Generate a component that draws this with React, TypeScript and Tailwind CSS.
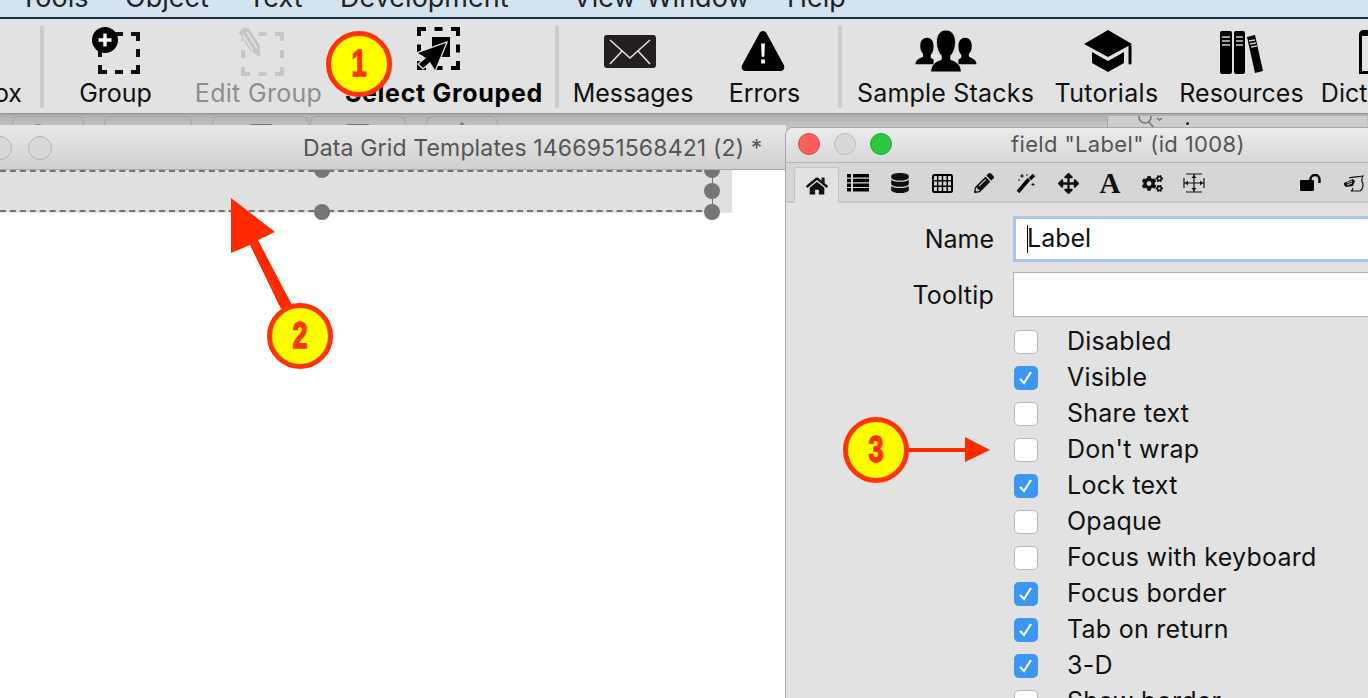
import type { ReactNode } from "react"
import { FaHome, FaDatabase, FaPencilAlt, FaArrowsAlt, FaCogs } from "react-icons/fa"

const ui = { fontFamily: "Inter, Roboto, sans-serif" }

const menus = [
  { label: "Tools", w: "w-[125px] pl-[20px]" },
  { label: "Object", w: "w-[123px]" },
  { label: "Text", w: "w-[92px]" },
  { label: "Development", w: "w-[233px]" },
  { label: "View", w: "w-[73px]" },
  { label: "Window", w: "w-[141px]" },
  { label: "Help", w: "w-[60px]" },
]

// dashed square used by the group icons, corners are little L shapes
const DashBox = ({ x, y, s, h, color }: { x: number; y: number; s: number; h: number; color: string }) => {
  const r = x + s
  const b = y + h
  const m = x + s / 2
  const n = y + h / 2
  return (
    <path
      d={`M${x} ${y + 7}V${y}h7M${r - 7} ${y}h7v7M${x} ${b - 7}v7h7M${r - 7} ${b}h7v-7M${m - 4} ${y}h8M${m - 4} ${b}h8M${x} ${n - 4}v8M${r} ${n - 4}v8`}
      fill="none"
      stroke={color}
      strokeWidth="4"
    />
  )
}

const GroupIcon = () => (
  <svg width="48" height="48" viewBox="0 0 48 48" className="mb-[1px]">
    <DashBox x={8} y={7} s={38} h={38} color="#111" />
    <circle cx="13" cy="13" r="13" fill="#000" />
    <path d="M13 6.5v13M6.5 13h13" stroke="#fff" strokeWidth="3.4" />
  </svg>
)

const EditGroupIcon = () => (
  <svg width="50" height="50" viewBox="0 0 50 50">
    <DashBox x={9} y={8} s={39} h={40} color="#c6c6c6" />
    <path d="M4 6 10 1l5 1 11 17 1 13-11-7Z" fill="#c4c4c4" stroke="#e2e2e2" strokeWidth="1" />
    <path d="M9 9l10 16M13 6l10 16" stroke="#e2e2e2" strokeWidth="1.5" />
  </svg>
)

const SelectIcon = () => (
  <svg width="54" height="50" viewBox="0 0 54 50">
    <g transform="translate(0 1)">
      <DashBox x={2} y={2} s={39} h={39} color="#000" />
      <rect x="15" y="10" width="18" height="20" fill="#000" />
      <path d="M29 16 1 26l8 5-7 6 4 4 7-6 5 8Z" fill="#000" stroke="#e2e2e2" strokeWidth="2.5" paintOrder="stroke" />
    </g>
  </svg>
)

const MailIcon = () => (
  <svg width="52" height="33" viewBox="0 0 52 33" className="mb-[8px] mr-[6px]">
    <rect width="52" height="33" rx="3" fill="#231f20" />
    <path d="M6 5 26 23 46 5M6 29l12-13M46 29 34 16" stroke="#e2e2e2" strokeWidth="1.6" fill="none" />
  </svg>
)

const WarnIcon = () => (
  <svg width="44" height="41" viewBox="0 0 46 43" className="mb-[4px] mr-[4px]">
    <path d="M23 0c2 0 3 1 4 3l18 33c1 3 0 6-4 6H5c-4 0-5-3-4-6L19 3c1-2 2-3 4-3Z" fill="#000" />
    <path d="M21 13h4l-.6 14h-2.8ZM21 30h4v4h-4Z" fill="#fff" />
  </svg>
)

const PeopleIcon = () => (
  <svg width="64" height="42" viewBox="0 0 64 44" className="mb-[4px]">
    <path d="M12 8c5 0 7 4 7 9 0 4-1 7-3 9v3l3 2v5H0c0-4 3-6 8-8v-3c-2-2-3-5-3-8 0-5 2-9 7-9Z" fill="#000" />
    <path d="M52 8c-5 0-7 4-7 9 0 4 1 7 3 9v3l-3 2v5h19c0-4-3-6-8-8v-3c2-2 3-5 3-8 0-5-2-9-7-9Z" fill="#000" />
    <path d="M32 0c7 0 10 6 10 13 0 6-2 11-5 14v4c6 2 11 5 11 13H16c0-8 5-11 11-13v-4c-3-3-5-8-5-14 0-7 3-13 10-13Z" fill="#000" stroke="#e2e2e2" strokeWidth="1" />
  </svg>
)

const CapIcon = () => (
  <svg width="52" height="43" viewBox="0 0 50 43" className="mb-[3px] ml-[4px]">
    <path d="M24 0 48 14 24 27 0 14Z" fill="#000" />
    <path d="M8 22 24 31 40 22V33L24 42 8 33Z" fill="#000" />
    <path d="M46 16v17" stroke="#000" strokeWidth="3" strokeLinecap="round" />
  </svg>
)

const BooksIcon = () => (
  <svg width="44" height="43" viewBox="0 0 44 43" className="mb-[2px]">
    <rect width="12" height="43" rx="2" fill="#000" />
    <rect x="14" width="11" height="43" rx="2" fill="#000" />
    <path d="M27 6l8-2 8 36-8 2Z" fill="#000" />
    <path d="M2 6h8M2 10h8M2 14h8M16 6h7M16 10h7M16 14h7M29 10l6-1M30 13l6-1M31 16l6-1" stroke="#ccc" strokeWidth="1.3" />
  </svg>
)

const DictIcon = () => (
  <svg width="48" height="44" viewBox="0 0 48 44" className="mb-[2px]">
    <path d="M2 44V4c0-2 2-4 4-4h42v6H5v35h43v3Z" fill="#000" />
  </svg>
)

const ListIcon = () => (
  <svg width="22" height="18" viewBox="0 0 22 18" fill="#000">
    <path d="M0 0h4v3.5H0ZM6 0h16v3.5H6ZM0 4.7h4v3.5H0ZM6 4.7h16v3.5H6ZM0 9.4h4v3.5H0ZM6 9.4h16v3.5H6ZM0 14.1h4v3.5H0ZM6 14.1h16v3.5H6Z" />
  </svg>
)

const TableIcon = () => (
  <svg width="21" height="19" viewBox="0 0 21 19" fill="none" stroke="#000">
    <rect x="1" y="1" width="19" height="17" rx="1.5" strokeWidth="2" />
    <path d="M5.7 1v17M10.5 1v17M15.2 1v17M1 6.7h19M1 12.3h19" strokeWidth="1.5" />
  </svg>
)

const WandIcon = () => (
  <svg width="20" height="20" viewBox="0 0 20 20">
    <path d="M2 19 13 6" stroke="#000" strokeWidth="3.6" />
    <path d="M14 6l4-4" stroke="#000" strokeWidth="3.6" />
    <path d="M6 1v4M4 3h4M2 7h2M17 10v3M15.500 11.500h3M11 1v2" stroke="#000" strokeWidth="0.9" />
  </svg>
)

const SizeIcon = () => (
  <svg width="22" height="20" viewBox="0 0 22 20" fill="none" stroke="#111" strokeWidth="1.2">
    <path d="M3 1h16M3 19h16M1 5v10M21 5v10M11 1v18M1 10h20" />
    <path d="M11 2 8.500 5h5ZM11 18l-2.500-3h5ZM2 10l3-2.500v5ZM20 10l-3-2.500v5Z" fill="#111" stroke="none" />
  </svg>
)

const LockIcon = () => (
  <svg width="22" height="18" viewBox="0 0 22 18">
    <rect y="6" width="14" height="11" rx="1" fill="#000" />
    <path d="M10.500 7V5.500a4.500 4.500 0 0 1 9 0V9" fill="none" stroke="#000" strokeWidth="2.400" />
  </svg>
)

const ScriptIcon = () => (
  <svg width="21" height="17" viewBox="0 0 21 17" fill="none" stroke="#111" strokeWidth="1.200">
    <path d="M6 3c4-1 9-1 14-2-2 3-1 6 0 8 0 3-1 6-3 7H8c2-1 2-2 2-3" />
    <path d="M1 8l9-4 2 2-2 5-7 1-2-2Z" fill="#111" stroke="none" />
    <path d="M4 8l5-2M4 10l5-2" stroke="#ddd" strokeWidth="0.900" />
  </svg>
)

const SearchIcon = () => (
  <svg width="26" height="14" viewBox="0 0 26 14" fill="none" stroke="#777" strokeWidth="1.600">
    <circle cx="7" cy="1" r="6" />
    <path d="M11 6l6 7M19 2l2.500 2L24 2" />
  </svg>
)

type Tool = { label: string; w: string; icon: ReactNode; color?: string; bold?: boolean; pad?: string }

const tools: Tool[] = [
  { label: "Group", w: "w-[143px]", icon: <GroupIcon /> },
  { label: "Edit Group", w: "w-[143px]", icon: <EditGroupIcon />, color: "text-[#8e8e8e] tracking-[0.3px]" },
  { label: "Select Grouped", w: "w-[225px]", icon: <SelectIcon />, bold: true, pad: "pl-[3px]" },
]

const tools2: Tool[] = [
  { label: "Messages", w: "w-[148px]", icon: <MailIcon /> },
  { label: "Errors", w: "w-[131px]", icon: <WarnIcon />, pad: "pr-[16px]" },
]

const tools3: Tool[] = [
  { label: "Sample Stacks", w: "w-[207px]", icon: <PeopleIcon />, color: "text-[#111] tracking-[0.2px]" },
  { label: "Tutorials", w: "w-[115px]", icon: <CapIcon />, color: "text-[#111] tracking-[0.3px]" },
  { label: "Resources", w: "w-[155px]", icon: <BooksIcon /> },
  { label: "Dictionary", w: "w-[124px]", icon: <DictIcon /> },
]

const ToolItem = ({ t }: { t: Tool }) => (
  <div className={`${t.w} ${t.pad ?? ""} shrink-0 flex flex-col items-center`}>
    <div className="h-[50px] flex items-end justify-center">{t.icon}</div>
    <div className={`mt-[2px] whitespace-nowrap text-[25px] leading-[30px] ${t.bold ? "font-bold text-black tracking-[0.7px]" : t.color ?? "text-[#111]"}`}>{t.label}</div>
  </div>
)

const Sep = () => <div className="w-[4px] h-[82px] shrink-0 bg-[#cccccc]" />

const inspectorIcons = [
  <ListIcon />,
  <FaDatabase size={20} />,
  <TableIcon />,
  <FaPencilAlt size={20} />,
  <WandIcon />,
  <FaArrowsAlt size={21} />,
  <span className="text-[29px] leading-[30px] font-bold" style={{ fontFamily: "'Liberation Serif', serif" }}>A</span>,
  <FaCogs size={21} />,
  <SizeIcon />,
]

const checks = [
  { label: "Disabled", on: false },
  { label: "Visible", on: true },
  { label: "Share text", on: false },
  { label: "Don't wrap", on: false },
  { label: "Lock text", on: true },
  { label: "Opaque", on: false },
  { label: "Focus with keyboard", on: false },
  { label: "Focus border", on: true },
  { label: "Tab on return", on: true },
  { label: "3-D", on: true },
  { label: "Show border", on: false },
]

const Badge = ({ n, cls }: { n: string; cls: string }) => (
  <div className={`absolute w-[66px] h-[66px] rounded-full bg-[#ffff00] border-[5px] border-[#ff3300] flex items-center justify-center ${cls}`}>
    <span className="text-[#ff3300] text-[36px] font-bold scale-x-75 [-webkit-text-stroke:1.5px_#ff3300]" style={{ fontFamily: "'Liberation Sans', sans-serif" }}>{n}</span>
  </div>
)

const Handle = ({ cls }: { cls: string }) => <div className={`absolute w-[16px] h-[16px] rounded-full bg-[#767474] ${cls}`} />

const BackTab = ({ w, children }: { w: string; children?: ReactNode }) => (
  <div className={`${w} h-[14px] shrink-0 border border-b-0 border-[#a4a4a4] rounded-t-[7px] flex justify-center pt-[7px]`}>{children}</div>
)

export default function App() {
  return (
    <div className="relative w-[1368px] h-[698px] overflow-hidden bg-[#cacaca]" style={ui}>
      {/* menu bar, cut at the top */}
      <div className="h-[19px] bg-[#d3e3f0] border-b-[2px] border-[#23303a] flex items-start overflow-hidden">
        {menus.map((m) => (
          <div key={m.label} className={`${m.w} shrink-0 text-[27px] leading-[30px] text-[#222] mt-[-17px]`}>{m.label}</div>
        ))}
      </div>

      {/* toolbar */}
      <div className="h-[95px] bg-[#e2e2e2] flex items-start pt-[7px] border-b border-[#8f8f8f]">
        <div className="w-[40px] shrink-0 h-full flex items-end justify-end pr-[18px] pb-[5px] text-[25px] leading-[30px] text-[#111]">ox</div>
        <Sep />
        {tools.map((t) => <ToolItem key={t.label} t={t} />)}
        <Sep />
        {tools2.map((t) => <ToolItem key={t.label} t={t} />)}
        <Sep />
        {tools3.map((t) => <ToolItem key={t.label} t={t} />)}
      </div>

      {/* tabs of the window behind */}
      <div className="h-[13px] bg-gradient-to-b from-[#adadad] to-[#c6c6c6] flex items-start pt-[2px] pl-[12px] overflow-hidden">
        <BackTab w="w-[72px]"><div className="w-[18px] h-[18px] rounded-full border-[2px] border-[#808080] mr-[20px]" /></BackTab>
        <div className="w-[20px] shrink-0" />
        <BackTab w="w-[88px]" />
        <div className="w-[20px] shrink-0" />
        <BackTab w="w-[97px]"><div className="w-[24px] h-[10px] border-[2px] border-[#707070] rounded-t-[2px]" /></BackTab>
        <div className="w-[1px] shrink-0" />
        <BackTab w="w-[96px]"><div className="w-[24px] h-[10px] border-[2px] border-[#707070] rounded-t-[2px]" /></BackTab>
        <div className="w-[20px] shrink-0" />
        <BackTab w="w-[72px]"><div className="w-[10px] h-[10px] rotate-45 border-l-[2px] border-t-[2px] border-[#808080]" /></BackTab>
        <div className="w-[609px] shrink-0" />
        <div className="w-[260px] h-[14px] shrink-0 border-l border-[#a4a4a4] bg-[#cdcdcd] flex items-start pl-[30px] gap-[22px]">
          <SearchIcon />
          <div className="w-[3px] h-[3px] mt-[6px] bg-[#222] rounded-full" />
        </div>
      </div>

      <div className="flex h-[571px]">
        {/* document window, its title bar sits a little over the tab strip */}
        <div className="relative w-[786px] shrink-0 mt-[-2px] h-[573px] flex flex-col bg-white">
          <div className="relative z-10 h-[45px] shrink-0 bg-gradient-to-b from-[#e8e8e8] to-[#d0d0d0] border-b border-[#a8a8a8] flex items-center pt-[1px]">
            <div className="w-[24px] h-[24px] shrink-0 ml-[-12px] rounded-full bg-[#d8d8d8] border border-[#b4b4b4]" />
            <div className="w-[24px] h-[24px] shrink-0 ml-[16px] rounded-full bg-[#d8d8d8] border border-[#b4b4b4]" />
            <div className="ml-[251px] pt-[2px] whitespace-nowrap text-[23px] tracking-[0.15px] text-[#555]">Data Grid Templates 1466951568421 (2) *</div>
          </div>
          <div className="relative h-[43px] w-[732px] shrink-0 bg-[#e0e0e0] border-b border-[#e8e8e8]">
            <div className="absolute left-0 top-0 w-[712px] h-[42px] border-y-2 border-x-0 border-dashed border-[#757575]" />
            <div className="absolute left-[712px] top-0 h-[42px] w-0 border-l border-[#757575]" />
            <Handle cls="left-[314px] top-[-8px]" />
            <Handle cls="left-[704px] top-[-8px]" />
            <Handle cls="left-[704px] top-[13px]" />
            <Handle cls="left-[314px] top-[34px]" />
            <Handle cls="left-[704px] top-[34px]" />
          </div>
        </div>

        {/* property inspector */}
        <div className="relative z-10 flex-1 ml-[-1px] bg-[#e2e2e2] border-l border-t border-[#a8a8a8] rounded-tl-[8px] overflow-hidden">
          <div className="h-[35px] bg-gradient-to-b from-[#ececec] to-[#d8d8d8] border-b border-[#b4b4b4] flex items-center pl-[12px] pb-[2px]">
            <div className="w-[22px] h-[22px] shrink-0 rounded-full bg-[#fc5f57] border border-[#e0443e]" />
            <div className="w-[22px] h-[22px] shrink-0 ml-[14px] rounded-full bg-[#d8d8d8] border border-[#bcbcbc]" />
            <div className="w-[22px] h-[22px] shrink-0 ml-[14px] rounded-full bg-[#28c940] border border-[#1aab29]" />
            <div className="ml-[119px] whitespace-nowrap text-[22px] tracking-[0.35px] text-[#555]">field "Label" (id 1008)</div>
          </div>
          <div className="h-[40px] bg-[#d6d6d6] border-b-[2px] border-[#c8c8c8] flex items-end pl-[8px] text-[#111]">
            <div className="w-[45px] h-[36px] mb-[-2px] shrink-0 bg-[#e2e2e2] border border-b-0 border-[#c4c4c4] rounded-t-[3px] flex items-center justify-center">
              <FaHome size={22} />
            </div>
            <div className="flex items-center h-[36px] ml-[-2px]">
              {inspectorIcons.map((ic, i) => (
                <div key={i} className="w-[42px] flex justify-center">{ic}</div>
              ))}
            </div>
            <div className="ml-[85px] h-[36px] flex items-center gap-[21px]">
              <LockIcon />
              <ScriptIcon />
            </div>
          </div>

          <div className="pt-[13px] pl-[227px]">
            <div className="flex items-center h-[46px]">
              <div className="w-[208px] ml-[-227px] pt-[1px] shrink-0 text-right text-[25px] text-[#111]">Name</div>
              <div className="ml-[19px] mr-[-10px] flex-1 h-[46px] bg-white border-[3px] border-[#a9c6e8] flex items-center pl-[11px] text-[25px] text-[#111]">
                <span className="w-[1px] h-[28px] bg-black mr-[-1px]" />Label
              </div>
            </div>
            <div className="flex items-center h-[45px] mt-[10px]">
              <div className="w-[208px] ml-[-227px] pt-[2px] shrink-0 text-right text-[25px] tracking-[0.2px] text-[#111]">Tooltip</div>
              <div className="ml-[19px] mr-[-10px] flex-1 h-[45px] bg-white border border-[#b4b4b4]" />
            </div>
            <div className="mt-[7px] flex flex-col">
              {checks.map((c) => (
                <div key={c.label} className="flex items-center h-[36px] pl-[1px]">
                  {c.on ? (
                    <div className="w-[24px] h-[24px] shrink-0 rounded-[5px] bg-[#3b96f5] flex items-center justify-center">
                      <svg width="16" height="14" viewBox="0 0 16 14" fill="none" stroke="#fff" strokeWidth="2.2"><path d="M2 8l4 4 7-11" /></svg>
                    </div>
                  ) : (
                    <div className="w-[24px] h-[24px] shrink-0 rounded-[5px] bg-white border border-[#b8b8b8]" />
                  )}
                  <div className="ml-[29px] whitespace-nowrap text-[25px] tracking-[0.25px] text-[#111]">{c.label}</div>
                </div>
              ))}
            </div>
          </div>
        </div>
      </div>

      {/* annotations */}
      <svg className="absolute left-0 top-0 z-20 pointer-events-none" width="1368" height="698">
        <path d="M231 198 275 232 258 240 292 305 281 309 250 245 231 253Z" fill="#ff2a00" />
        <path d="M905 448h60v-11l25 13-25 12v-10h-60Z" fill="#ff2a00" />
      </svg>
      <Badge n="1" cls="left-[326px] top-[31px] z-20" />
      <Badge n="2" cls="left-[267px] top-[303px] z-20" />
      <Badge n="3" cls="left-[843px] top-[417px] z-20" />
    </div>
  )
}
